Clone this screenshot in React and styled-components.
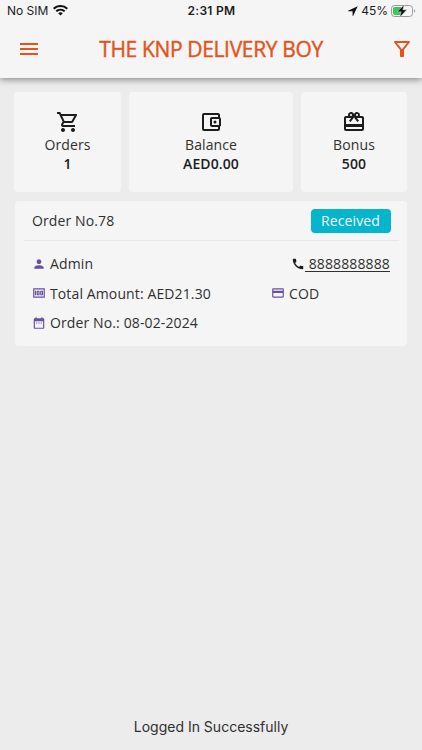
import React from "react";
import styled, { createGlobalStyle } from "styled-components";
import {
  MdMenu,
  MdOutlineFilterAlt,
  MdOutlineShoppingCart,
  MdOutlineAccountBalanceWallet,
  MdOutlineCardGiftcard,
  MdPerson,
  MdCall,
  MdOutlineMoney,
  MdDateRange,
  MdPayment,
} from "react-icons/md";

const GlobalStyle = createGlobalStyle`
  * {
    box-sizing: border-box;
  }
  body {
    margin: 0;
    background: #ececec;
    color: #303030;
    font-family: "Open Sans", "Noto Sans", sans-serif;
  }
  svg {
    display: block;
    flex: none;
  }
`;

const StyledScreen = styled.div`
  display: flex;
  flex-direction: column;
  width: 422px;
  height: 750px;
  overflow: hidden;
`;

const StyledHeader = styled.header`
  height: 77.5px;
  background: #f5f5f5;
  box-shadow: 0 1px 7px rgba(0, 0, 0, 0.5);
`;

const StyledStatusBar = styled.div`
  display: grid;
  grid-template-columns: 1fr auto 1fr;
  align-items: center;
  height: 21px;
  padding: 0 6px 0 7px;
  color: #1c1c1c;
  font-family: Inter, sans-serif;
  font-size: 12px;
`;

const StyledStatusGroup = styled.div`
  display: flex;
  align-items: center;
  justify-content: ${(p) => (p.$end ? "flex-end" : "flex-start")};
  gap: ${(p) => p.$gap};
`;

const StyledTime = styled.div`
  font-weight: 600;
  letter-spacing: 0.3px;
`;

const StyledNav = styled.nav`
  display: grid;
  grid-template-columns: 24px 1fr 24px;
  align-items: center;
  height: 56px;
  padding: 0 8.5px 0 16.5px;
  color: #e2541b;
`;

const StyledTitle = styled.h1`
  margin: 0;
  padding-right: 8px;
  font-size: 21px;
  font-weight: 400;
  letter-spacing: -0.35px;
  text-align: center;
  white-space: nowrap;
  -webkit-text-stroke: 0.4px currentColor;
`;

const StyledStats = styled.div`
  display: grid;
  grid-template-columns: 107px 164px 106px;
  gap: 8px;
  padding: 14.5px 0 0 14px;
`;

const StyledStat = styled.div`
  display: flex;
  flex-direction: column;
  align-items: center;
  height: 100px;
  padding-top: 18px;
  border-radius: 4px;
  background: #f5f5f5;
`;

const StyledStatLabel = styled.div`
  margin-top: 1px;
  font-size: 14px;
  line-height: 20px;
  letter-spacing: 0.1px;
`;

const StyledStatValue = styled.div`
  color: #1c1c1c;
  font-size: 14px;
  font-weight: 600;
  line-height: 18px;
  letter-spacing: 0.1px;
`;

const StyledOrder = styled.section`
  width: 392px;
  height: 145px;
  margin: 9px 0 0 15px;
  padding: 0 8px 0 9px;
  border-radius: 4px;
  background: #f5f5f5;
  font-size: 14px;
  letter-spacing: 0.12px;
`;

const StyledOrderHead = styled.div`
  display: flex;
  align-items: center;
  justify-content: space-between;
  height: 40px;
  padding: 0 8.5px 0 8px;
  border-bottom: 1px solid #e8e8e8;
`;

const StyledBadge = styled.span`
  width: 80px;
  height: 24px;
  border-radius: 4px;
  background: #05b5cc;
  color: #f5f5f5;
  line-height: 24px;
  text-align: center;
`;

const StyledRows = styled.div`
  padding: 8px 9px 0 8px;
`;

const StyledRow = styled.div`
  display: grid;
  grid-template-columns: 239px 1fr;
  align-items: center;
  height: 29.5px;
`;

const StyledField = styled.div`
  display: flex;
  align-items: center;
  gap: ${(p) => (p.$end ? "0" : "4px")};
  justify-self: ${(p) => (p.$end ? "end" : "start")};
  white-space: pre;

  svg {
    color: ${(p) => p.$iconColor || "#6750a4"};
  }
`;

const StyledPhone = styled.a`
  color: #303030;
  text-decoration: underline;
  text-decoration-thickness: 1px;
  text-underline-offset: 2px;
`;

const StyledToast = styled.div`
  margin-top: auto;
  padding-bottom: 14px;
  font-family: Inter, sans-serif;
  font-size: 14px;
  line-height: 18px;
  text-align: center;
`;

const WifiIcon = () => (
  <svg width="15" height="11" viewBox="0 0 15 11" fill="#111">
    <path d="M7.5 0C4.6 0 2 1.1 0 2.9l1.4 1.5a9 9 0 0 1 12.2 0L15 2.9A11 11 0 0 0 7.5 0Z" />
    <path d="M7.5 3.8c-1.9 0-3.6.7-4.9 1.9L4 7.1a5.2 5.2 0 0 1 7 0l1.4-1.4a7.2 7.2 0 0 0-4.9-1.9Z" />
    <path d="M7.5 7.3c-.9 0-1.7.3-2.3.9l2.3 2.4 2.3-2.4c-.6-.6-1.4-.9-2.3-.9Z" />
  </svg>
);

const LocationIcon = () => (
  <svg width="10" height="10" viewBox="0 0 10 10" fill="#111">
    <path d="M9.7.3 0 4.8l.1.5h4.5v4.5l.5.1Z" />
  </svg>
);

const BatteryIcon = () => (
  <svg width="25" height="14" viewBox="0 0 25 14">
    <rect x=".5" y="1.5" width="21" height="11" rx="3" fill="none" stroke="#999" />
    <path d="M4 3h6v8H4a2 2 0 0 1-2-2V5a2 2 0 0 1 2-2Z" fill="#3cc75c" />
    <path d="M23 5.2c1.5.6 1.5 3 0 3.6Z" fill="#999" />
    <path d="M13.2.8 6.2 7.8h4L8.8 13.2l7-7.4h-4Z" fill="#111" stroke="#f5f5f5" strokeWidth=".4" />
  </svg>
);

const stats = [
  { label: "Orders", value: "1", Icon: MdOutlineShoppingCart },
  { label: "Balance", value: "AED0.00", Icon: MdOutlineAccountBalanceWallet },
  { label: "Bonus", value: "500", Icon: MdOutlineCardGiftcard },
];

const App = () => {
  return (
    <StyledScreen>
      <GlobalStyle />
      <StyledHeader>
        <StyledStatusBar>
          <StyledStatusGroup $gap="5px">
            No SIM
            <WifiIcon />
          </StyledStatusGroup>
          <StyledTime>2:31 PM</StyledTime>
          <StyledStatusGroup $end $gap="3px">
            <LocationIcon />
            <span>45%</span>
            <BatteryIcon />
          </StyledStatusGroup>
        </StyledStatusBar>
        <StyledNav>
          <MdMenu size={24} />
          <StyledTitle>THE KNP DELIVERY BOY</StyledTitle>
          <MdOutlineFilterAlt size={24} />
        </StyledNav>
      </StyledHeader>

      <StyledStats>
        {stats.map(({ label, value, Icon }) => (
          <StyledStat key={label}>
            <Icon size={24} color="#1c1c1c" />
            <StyledStatLabel>{label}</StyledStatLabel>
            <StyledStatValue>{value}</StyledStatValue>
          </StyledStat>
        ))}
      </StyledStats>

      <StyledOrder>
        <StyledOrderHead>
          <span>Order No.78</span>
          <StyledBadge>Received</StyledBadge>
        </StyledOrderHead>
        <StyledRows>
          <StyledRow>
            <StyledField>
              <MdPerson size={14} />
              Admin
            </StyledField>
            <StyledField $end $iconColor="#1c1c1c">
              <MdCall size={14} />
              <StyledPhone> 8888888888</StyledPhone>
            </StyledField>
          </StyledRow>
          <StyledRow>
            <StyledField>
              <MdOutlineMoney size={14} />
              Total Amount: AED21.30
            </StyledField>
            <StyledField>
              <MdPayment size={14} />
              COD
            </StyledField>
          </StyledRow>
          <StyledRow>
            <StyledField>
              <MdDateRange size={14} />
              Order No.: 08-02-2024
            </StyledField>
          </StyledRow>
        </StyledRows>
      </StyledOrder>

      <StyledToast>Logged In Successfully</StyledToast>
    </StyledScreen>
  );
};

export default App;
